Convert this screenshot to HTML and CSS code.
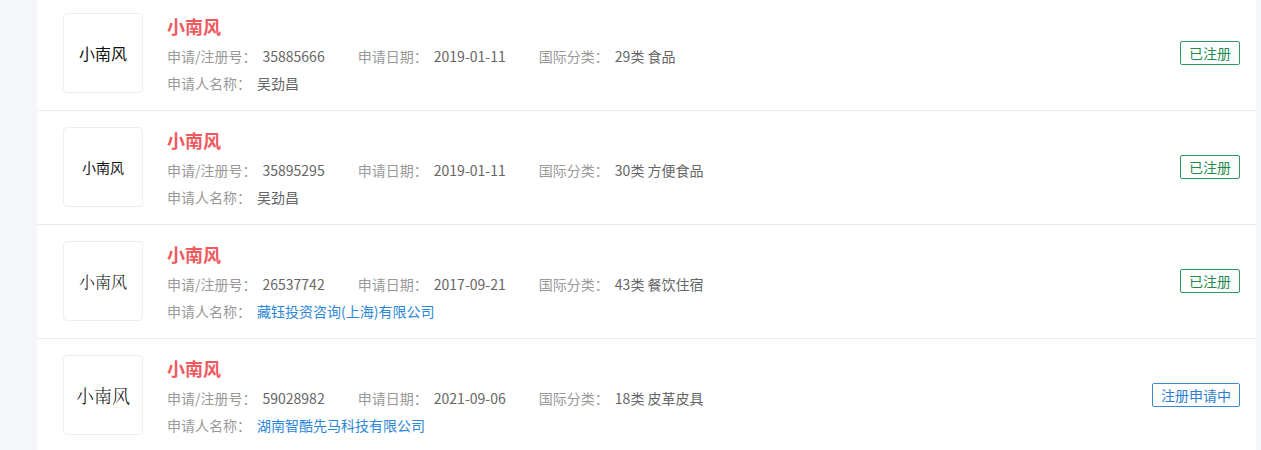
FILE: index.html
```html
<!DOCTYPE html>
<html lang="zh-CN">
<head>
    <meta charset="UTF-8">
    <meta name="viewport" content="width=device-width, initial-scale=1.0">
    <title>商标列表</title>
    <link rel="stylesheet" href="styles.css">
</head>
<body>

    <main class="panel">
        <ul class="tm-list">
            <li class="tm-item">
                <div class="tm-logo logo-md">小南风</div>
                <div class="tm-info">
                    <h3 class="tm-name">小南风</h3>
                    <p class="tm-meta">
                        <span class="field"><em>申请/注册号：</em>35885666</span>
                        <span class="field"><em>申请日期：</em>2019-01-11</span>
                        <span class="field"><em>国际分类：</em>29类 食品</span>
                    </p>
                    <p class="tm-meta">
                        <span class="field"><em>申请人名称：</em>吴劲昌</span>
                    </p>
                </div>
                <span class="status done">已注册</span>
            </li>
            <li class="tm-item">
                <div class="tm-logo logo-sm">小南风</div>
                <div class="tm-info">
                    <h3 class="tm-name">小南风</h3>
                    <p class="tm-meta">
                        <span class="field"><em>申请/注册号：</em>35895295</span>
                        <span class="field"><em>申请日期：</em>2019-01-11</span>
                        <span class="field"><em>国际分类：</em>30类 方便食品</span>
                    </p>
                    <p class="tm-meta">
                        <span class="field"><em>申请人名称：</em>吴劲昌</span>
                    </p>
                </div>
                <span class="status done">已注册</span>
            </li>
            <li class="tm-item">
                <div class="tm-logo logo-serif">小南风</div>
                <div class="tm-info">
                    <h3 class="tm-name">小南风</h3>
                    <p class="tm-meta">
                        <span class="field"><em>申请/注册号：</em>26537742</span>
                        <span class="field"><em>申请日期：</em>2017-09-21</span>
                        <span class="field"><em>国际分类：</em>43类 餐饮住宿</span>
                    </p>
                    <p class="tm-meta">
                        <span class="field"><em>申请人名称：</em><a href="#">藏钰投资咨询(上海)有限公司</a></span>
                    </p>
                </div>
                <span class="status done">已注册</span>
            </li>
            <li class="tm-item">
                <div class="tm-logo logo-serif logo-lg">小南风</div>
                <div class="tm-info">
                    <h3 class="tm-name">小南风</h3>
                    <p class="tm-meta">
                        <span class="field"><em>申请/注册号：</em>59028982</span>
                        <span class="field"><em>申请日期：</em>2021-09-06</span>
                        <span class="field"><em>国际分类：</em>18类 皮革皮具</span>
                    </p>
                    <p class="tm-meta">
                        <span class="field"><em>申请人名称：</em><a href="#">湖南智酷先马科技有限公司</a></span>
                    </p>
                </div>
                <span class="status pending">注册申请中</span>
            </li>
        </ul>
    </main>

</body>
</html>
```

FILE: styles.css
```css
body {
    margin: 0;
    padding: 0 5px 0 37px;
    background-color: #f5f6fa;
    color: #666;
    font-family: "Noto Sans CJK SC", "Noto Sans", sans-serif;
    font-size: 14px;
    overflow: hidden;
}

/* Panel */
.panel {
    background: #fff;
    min-height: 100vh;
}

.tm-list {
    list-style: none;
    margin: -3px 0 0;
    padding: 0;
}

.tm-item {
    display: flex;
    align-items: flex-start;
    padding: 16px 16px 13px 26px;
    border-bottom: 1px solid #ebebeb;
}

/* Logo box */
.tm-logo {
    width: 78px;
    height: 78px;
    flex-shrink: 0;
    border: 1px solid #eeeeee;
    border-radius: 4px;
    display: flex;
    align-items: center;
    justify-content: center;
    color: #111;
    margin-right: 24px;
}

.logo-md {
    font-size: 16px;
}

.logo-sm {
    font-size: 14px;
}

.logo-serif {
    font-family: "Noto Serif CJK SC", "Noto Sans CJK SC", serif;
    font-weight: 300;
    font-size: 16px;
}

.logo-lg {
    font-size: 18px;
}

/* Info */
.tm-info {
    flex: 1;
}

.tm-name {
    margin: 0 0 4px;
    font-size: 18px;
    line-height: 26px;
    color: #f05a5f;
    font-weight: bold;
}

.tm-meta {
    margin: 0;
    line-height: 27px;
    color: #666;
}

.field {
    margin-right: 30px;
}

.field em {
    font-style: normal;
    color: #999;
    margin-right: 6px;
}

.field a {
    color: #2d87d8;
    text-decoration: none;
}

/* Status badge */
.status {
    align-self: center;
    margin-bottom: 4px;
    border: 1px solid;
    border-radius: 2px;
    padding: 0 8px;
    height: 22px;
    line-height: 22px;
    font-size: 14px;
    white-space: nowrap;
}

.status.done {
    color: #1f8a4c;
    border-color: #2e9960;
}

.status.pending {
    color: #2d80d0;
    border-color: #3b8ad6;
}
```
